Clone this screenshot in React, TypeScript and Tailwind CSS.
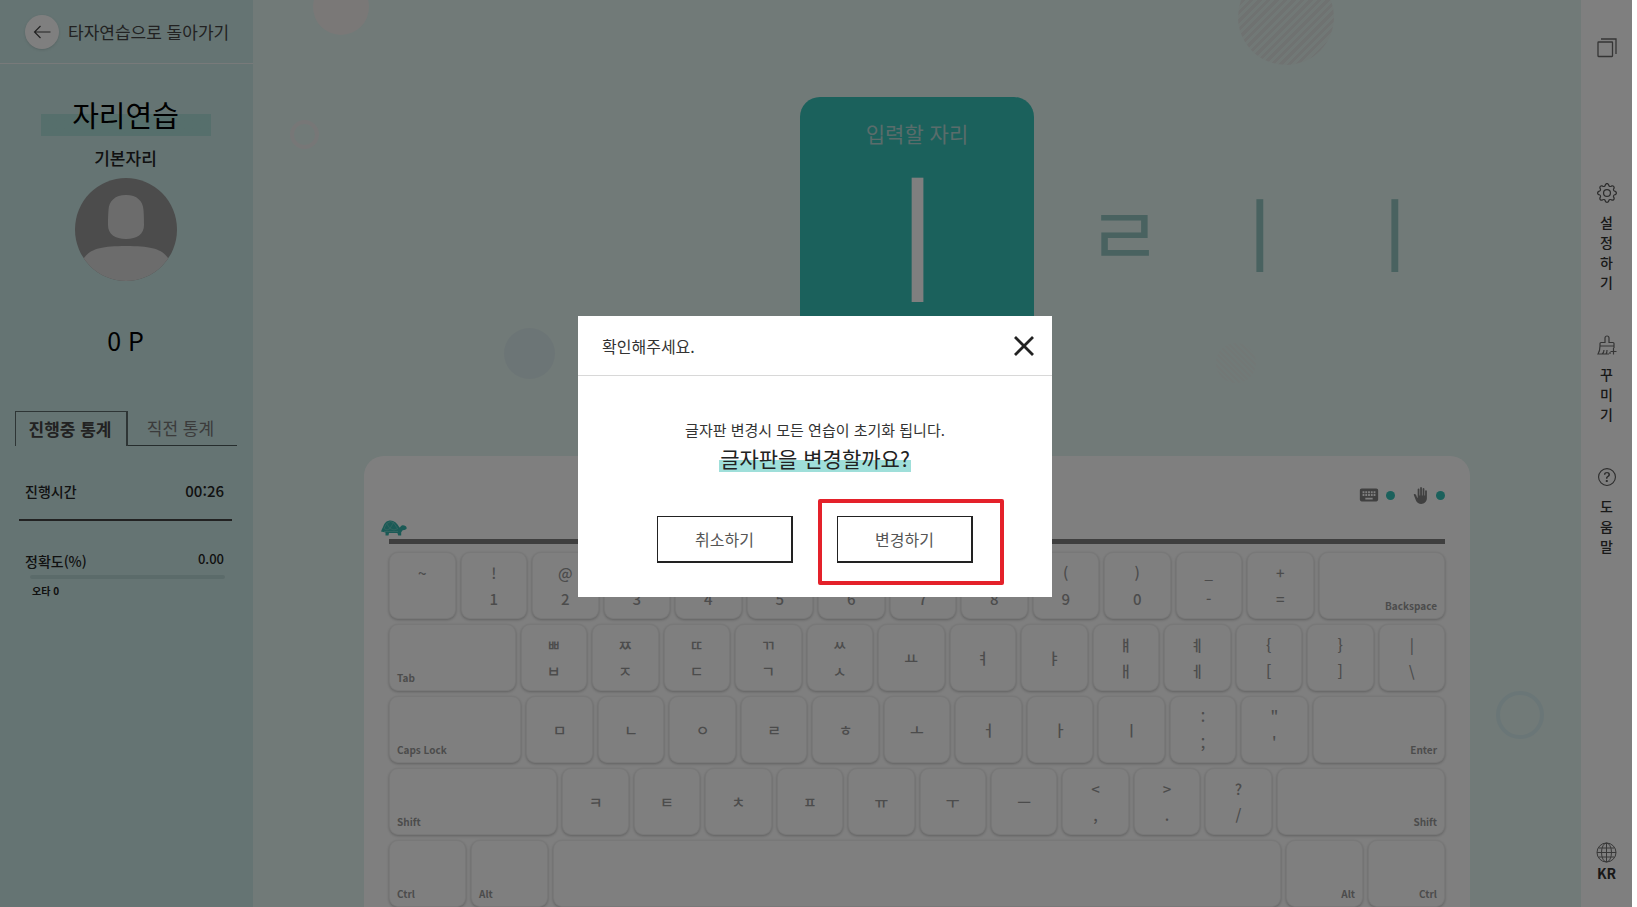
import { BsGear, BsQuestionCircle } from "react-icons/bs";
import { MdBackHand, MdKeyboard } from "react-icons/md";

type Key = { top?: string; label?: string; name?: string; side?: "left" | "right"; size?: number };

const pair = (top: string, label: string): Key => ({ top, label });
const single = (label: string): Key => ({ label });
const wide = (name: string, side: "left" | "right", size: number): Key => ({ name, side, size });

// size is the key's share of the row, a letter key is 129
const rows: Key[][] = [
  [
    pair("~", ""), pair("!", "1"), pair("@", "2"), pair("#", "3"), pair("$", "4"), pair("%", "5"), pair("^", "6"),
    pair("&", "7"), pair("*", "8"), pair("(", "9"), pair(")", "0"), pair("_", "-"), pair("+", "="),
    wide("Backspace", "right", 249),
  ],
  [
    wide("Tab", "left", 249),
    pair("ㅃ", "ㅂ"), pair("ㅉ", "ㅈ"), pair("ㄸ", "ㄷ"), pair("ㄲ", "ㄱ"), pair("ㅆ", "ㅅ"), single("ㅛ"), single("ㅕ"),
    single("ㅑ"), pair("ㅒ", "ㅐ"), pair("ㅖ", "ㅔ"), pair("{", "["), pair("}", "]"), pair("|", "\\"),
  ],
  [
    wide("Caps Lock", "left", 261),
    single("ㅁ"), single("ㄴ"), single("ㅇ"), single("ㄹ"), single("ㅎ"), single("ㅗ"), single("ㅓ"), single("ㅏ"),
    single("ㅣ"), pair(":", ";"), pair('"', "'"),
    wide("Enter", "right", 261),
  ],
  [
    wide("Shift", "left", 333),
    single("ㅋ"), single("ㅌ"), single("ㅊ"), single("ㅍ"), single("ㅠ"), single("ㅜ"), single("ㅡ"),
    pair("<", ","), pair(">", "."), pair("?", "/"),
    wide("Shift", "right", 333),
  ],
  [
    wide("Ctrl", "left", 150), wide("Alt", "left", 150), wide("", "left", 1452), wide("Alt", "right", 150),
    wide("Ctrl", "right", 150),
  ],
];

function KeyCap({ item }: { item: Key }) {
  return (
    <div
      style={{ flexGrow: item.size ?? 129 }}
      className="flex h-[67px] min-w-0 basis-0 flex-col justify-center rounded-[9px] border border-[#f0f0f0] bg-white text-center text-[15px] leading-[26px] font-medium text-[#999999] shadow-[0_1px_3px_rgba(0,0,0,0.25)]"
    >
      {item.name !== undefined ? (
        <span className={item.side === "left" ? "mt-auto px-[7px] text-left text-[10px] leading-6 font-bold" : "mt-auto px-[7px] text-right text-[10px] leading-6 font-bold"}>
          {item.name}
        </span>
      ) : (
        <>
          {item.top && <span>{item.top}</span>}
          {item.label !== undefined && <span>{item.label || "\u00a0"}</span>}
        </>
      )}
    </div>
  );
}

function Turtle() {
  return (
    <svg width="26" height="16" viewBox="0 0 26 16" fill="none">
      <path d="M0 11.500C1 9 1 9 2 7 3.500 2.500 6 .5 9.500.5s6.500 2.500 9 7c1 0 1-2 3-2.300 2-.2 4 .8 4.200 2.800 0 1.500-1.500 2-4 2.200l-1.500 2v3.300h-3l-.8-2.500H8L7.500 15.500h-3V12.500C3 12 1.500 12 0 11.500z" fill="#36b5ac" />
      <path d="M3 8.500l2.500-5 3.500 5L12.500 2.500l4 6M6 3.500L9.500 1.500l3.500 1.500M3 8.500l3 1.500 3-1.500 4 1.500 4-1.500M3 11.500h14" stroke="#72cdc6" strokeWidth="0.700" />
    </svg>
  );
}

function Globe() {
  return (
    <svg width="21" height="21" viewBox="0 0 21 21" fill="none" stroke="#707070" strokeWidth="1">
      <circle cx="10.500" cy="10.500" r="9.500" />
      <ellipse cx="10.500" cy="10.500" rx="5" ry="9.500" />
      <path d="M10.500 1v19M1 10.500h19M2.500 6h16M2.500 15h16" />
    </svg>
  );
}

function Windows() {
  return (
    <svg width="20" height="20" viewBox="0 0 20 20" fill="none" stroke="#6a6a6a" strokeWidth="1.300">
      <rect x="1" y="4" width="14.500" height="14.500" rx="0.500" />
      <path d="M4 1h15v15" />
    </svg>
  );
}

function Brush() {
  return (
    <svg width="20" height="20" viewBox="0 0 20 20" fill="none" stroke="#6a6a6a" strokeWidth="1.200">
      <path d="M3 11V8.500Q3 7.500 4 7.500h4V3a2 2 0 0 1 4 0v4.500h4q1 0 1 1V13M3 11h14M3 11q0 5-2 8h11M5 19q2-1 2-4M9 19q1-1 1-4M13 19v-2M16.500 13v6.500M13.500 16.500h6" />
    </svg>
  );
}

const menus = [
  { text: "설정하기", icon: <BsGear size={20} />, style: "mt-[125px]" },
  { text: "꾸미기", icon: <Brush />, style: "mt-[43px]" },
  { text: "도움말", icon: <BsQuestionCircle size={18} />, style: "mt-[43px]" },
];

function Sidebar() {
  return (
    <aside className="w-[253px] shrink-0 bg-[#cae8e6] text-[#222222]">
      <a href="#" className="flex h-16 items-center gap-[9px] border-b border-[#f0f5f5] pl-[25px] text-[17px] text-[#444444]">
        <span className="flex size-[34px] items-center justify-center rounded-full bg-white shadow-sm">
          <svg width="18" height="14" viewBox="0 0 18 14" fill="none" stroke="#444444" strokeWidth="1.200">
            <path d="M7.500 1L1.500 7l6 6M1.500 7h16" />
          </svg>
        </span>
        타자연습으로 돌아가기
      </a>
      <div className="flex flex-col pr-[2px]">
        <h1 className="mx-auto mt-[28px] w-[170px] bg-linear-to-b from-transparent from-[22px] to-[#acded8] to-[22px] text-center text-[29px] leading-[44px] text-black">
          자리연습
        </h1>
        <h2 className="mt-2 text-center text-[17px] leading-7 font-medium">기본자리</h2>
        <svg className="mx-auto mt-[6px]" width="102" height="103" viewBox="0 0 102 103">
          <clipPath id="face">
            <ellipse cx="51" cy="51.500" rx="51" ry="51.500" />
          </clipPath>
          <g clipPath="url(#face)">
            <rect width="102" height="103" fill="#989898" />
            <path d="M51 17c11 0 17 6 17.500 15 .5 7 .5 10 .5 15 0 9-7 14-18 14s-18-5-18-14c0-5 0-8 .5-15C34 23 40 17 51 17z" fill="#d8d8d8" />
            <path d="M7 84c5-12 16-16 44-16s39 4 44 16v20H7z" fill="#d8d8d8" />
          </g>
        </svg>
        <p className="mt-[39px] text-center text-[25px] leading-10 text-black">0 P</p>
        <div role="tablist" className="mr-[14px] ml-[15px] mt-[51px] flex h-[35px] text-[17px]">
          <button role="tab" aria-selected="true" className="w-[113px] border-t border-r-2 border-l border-[#5c6b6a] pr-[2px] font-bold text-[#444444]">
            진행중 통계
          </button>
          <button role="tab" aria-selected="false" className="flex-1 border-b border-[#4c5b5a] pr-1 text-[#777777]">
            직전 통계
          </button>
        </div>
        <dl className="mx-[19px] text-sm font-medium">
          <div className="flex h-[75px] items-center justify-between border-b-2 border-[#444444] pt-4 pr-2 pl-[6px]">
            <dt>진행시간</dt>
            <dd className="text-[15px]">00:26</dd>
          </div>
          <div className="mt-7 flex justify-between pr-2 pl-[6px] leading-5">
            <dt className="pt-[2px]">정확도(%)</dt>
            <dd className="text-[13px]">0.00</dd>
          </div>
        </dl>
        <div className="mt-[4px] mr-[26px] ml-[30px] h-1 rounded bg-[#b7d6d4]" />
        <p className="mt-1 ml-8 text-[10px] leading-4 font-bold">오타 0</p>
      </div>
    </aside>
  );
}

function Backdrop() {
  return (
    <div className="absolute inset-0 overflow-hidden" aria-hidden="true">
      <div className="absolute -top-[21px] left-[60px] size-14 rounded-full bg-[#f4f1ef]" />
      <div className="absolute top-[120px] left-[37px] size-[29px] rounded-full border-4 border-[#eeefef]" />
      <div className="absolute top-[328px] left-[251px] size-[51px] rounded-full bg-[#d9eaec]" />
      <div className="absolute -top-[31px] right-[247px] size-24 rounded-full bg-[repeating-linear-gradient(135deg,#dfe5e3_0_3px,#e2f0ec_3px_6px)]" />
      <div className="absolute top-[343px] right-[325px] size-10 rounded-full bg-[repeating-linear-gradient(45deg,#e5f0ed_0_2px,#e2f4f0_2px_4px)]" />
      <div className="absolute top-[691px] right-[37px] size-12 rounded-full border-4 border-[#d4ecee]" />
    </div>
  );
}

function Practice() {
  return (
    <main className="relative flex min-w-0 flex-1 flex-col bg-[#e2f4f0]">
      <Backdrop />
      <section className="relative mt-[97px] grid h-[268px] grid-cols-[minmax(0,1fr)_234px_minmax(0,1fr)]">
        <div className="col-start-2 rounded-[20px] bg-[#36c2b8] pt-5 text-center">
          <p className="text-[21px] leading-8 text-[#b5d9d6]">입력할 자리</p>
          <p className="text-[140px] leading-[162px] text-white">ㅣ</p>
        </div>
        <div className="flex items-center overflow-hidden pl-[23px] text-[82px] leading-[100px] text-[#93c5c1]">
          <span className="w-[135px] shrink-0 text-center">ㄹ</span>
          <span className="w-[135px] shrink-0 text-center">ㅣ</span>
          <span className="w-[135px] shrink-0 text-center">ㅣ</span>
        </div>
      </section>
      <section className="relative mx-[111px] mt-[91px] flex-1 rounded-t-[20px] bg-white px-[25px]">
        <div className="flex h-16 items-center justify-end pt-[14px] text-[#808080]">
          <label className="flex items-center gap-1">
            <MdKeyboard size={22} aria-label="키보드" />
            <input type="checkbox" defaultChecked className="ml-[2px] size-[9px] appearance-none rounded-full bg-[#36c2b8]" />
          </label>
          <label className="ml-[17px] flex items-center gap-1">
            <MdBackHand size={17} aria-label="손" />
            <input type="checkbox" defaultChecked className="ml-[3px] size-[9px] appearance-none rounded-full bg-[#36c2b8]" />
          </label>
        </div>
        <div className="-ml-2 h-[19px]">
          <Turtle />
        </div>
        <div className="mb-2 h-[5px] bg-[#7e7e7e]" />
        <div className="flex flex-col gap-[5px]">
          {rows.map((row, i) => (
            <div key={i} className="flex gap-[5px]">
              {row.map((item, j) => (
                <KeyCap key={j} item={item} />
              ))}
            </div>
          ))}
        </div>
      </section>
    </main>
  );
}

function Rail() {
  return (
    <nav className="flex w-[51px] shrink-0 flex-col items-center bg-white text-sm leading-5 font-medium text-[#333333]">
      <button aria-label="창 모드" className="mt-[38px]">
        <Windows />
      </button>
      {menus.map((menu) => (
        <button key={menu.text} className={menu.style}>
          <span className="flex h-5 items-center justify-center text-[#5a5a5a]">{menu.icon}</span>
          <span className="mx-auto mt-[9px] block w-[14px] break-all">{menu.text}</span>
        </button>
      ))}
      <button className="mt-auto mb-6 flex flex-col items-center text-sm leading-5 font-bold">
        <Globe />
        KR
      </button>
    </nav>
  );
}

function ConfirmDialog() {
  return (
    <div className="absolute inset-0 mr-[5px] flex items-center justify-center bg-black/50 pt-[6px] pr-[2px]">
      <div role="dialog" aria-modal="true" className="relative h-[281px] w-[474px] bg-white text-base text-[#333333]">
        <div className="flex h-[60px] items-center justify-between border-b border-[#d8d8d8] pr-[18px] pl-6">
          <p>확인해주세요.</p>
          <button aria-label="닫기">
            <svg width="20" height="20" viewBox="0 0 20 20" stroke="#222222" strokeWidth="2.800">
              <path d="M1 1l18 18M19 1L1 19" />
            </svg>
          </button>
        </div>
        <p className="mt-[42px] text-center text-[15px] leading-6">글자판 변경시 모든 연습이 초기화 됩니다.</p>
        <p className="text-center text-[21px] leading-8 text-[#222222]">
          <span className="inline-block bg-linear-to-b from-transparent from-[15px] to-[#9fdfda] to-[15px] px-[1px] leading-[27px]">
            글자판을 변경할까요?
          </span>
        </p>
        <div className="mt-[42px] flex justify-center gap-11 text-[#555555]">
          <button className="h-[47px] w-[136px] border border-r-2 border-b-2 border-[#222222]">취소하기</button>
          <button className="h-[47px] w-[136px] border border-r-2 border-b-2 border-[#222222]">변경하기</button>
        </div>
        <div className="pointer-events-none absolute top-[183px] left-[240px] h-[86px] w-[186px] rounded-[2px] border-4 border-[#e4212a]" />
      </div>
    </div>
  );
}

export default function App() {
  return (
    <div lang="ko" className="relative flex min-h-screen bg-white pr-[5px] font-['Noto_Sans_CJK_KR',sans-serif]">
      <Sidebar />
      <Practice />
      <Rail />
      <ConfirmDialog />
    </div>
  );
}
